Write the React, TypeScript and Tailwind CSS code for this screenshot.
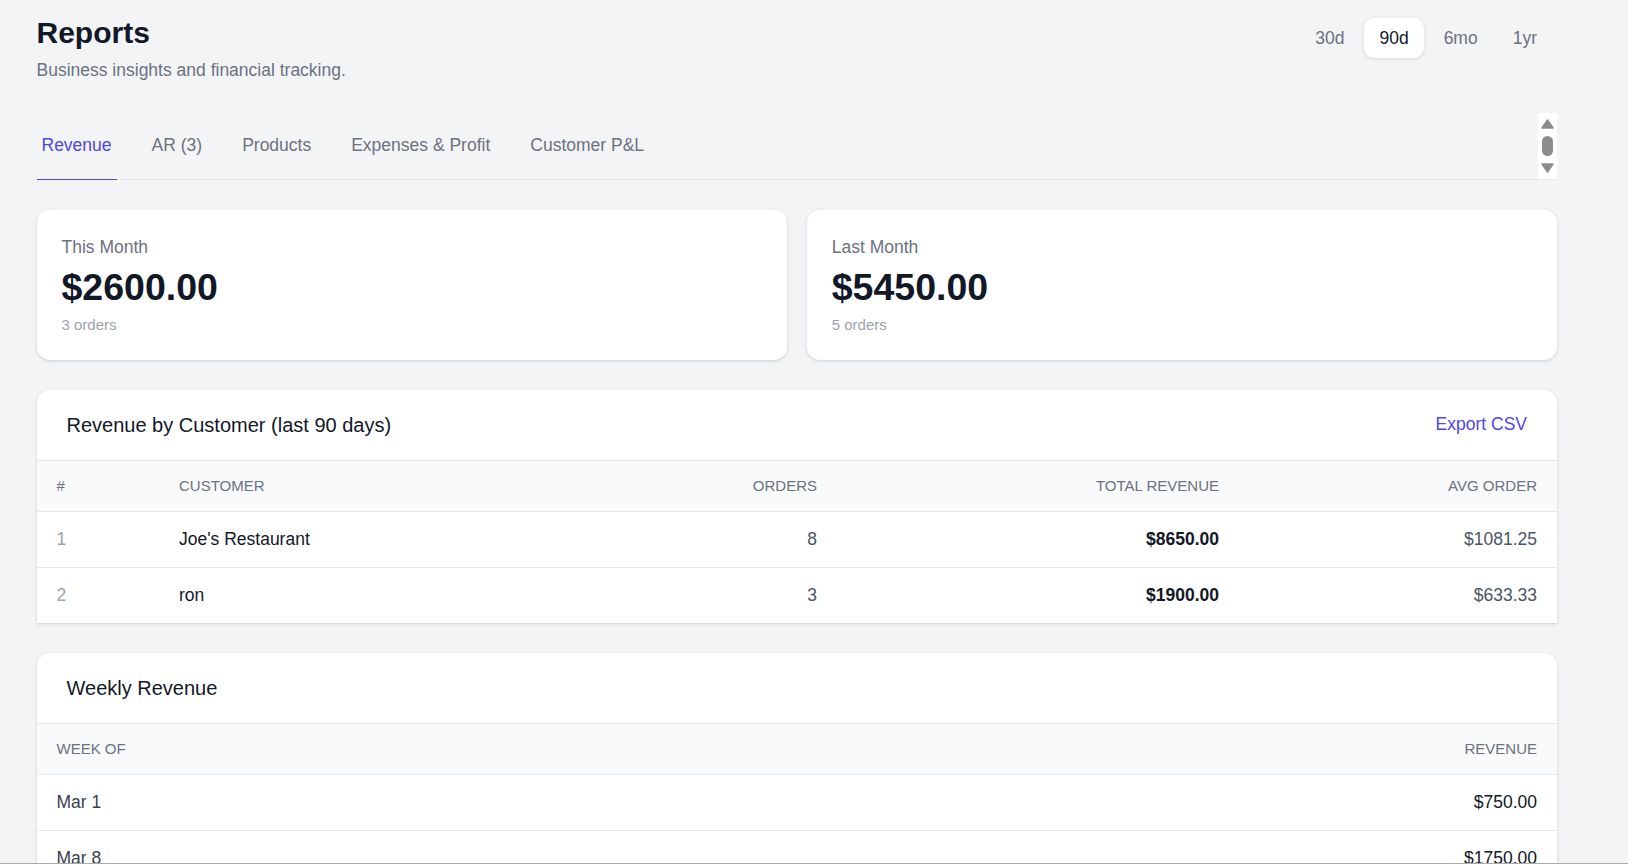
const sans = "font-['Liberation_Sans',Arial,sans-serif]";

const periods = ["30d", "90d", "6mo", "1yr"];
const tabs = ["Revenue", "AR (3)", "Products", "Expenses & Profit", "Customer P&L"];

function StatCard({ label, value, orders }: { label: string; value: string; orders: string }) {
  return (
    <div className="flex-1 h-[150px] bg-white rounded-[13px] shadow-[0_1px_4px_rgba(0,0,0,0.1),0_1px_2px_rgba(0,0,0,0.06)] pl-[25px] pt-[25px]">
      <p className="text-[17.5px] leading-[24px] text-[#6b7280]">{label}</p>
      <p className="text-[37.5px] leading-[44px] font-bold text-[#111827] mt-[6px]">{value}</p>
      <p className="text-[15px] leading-[20px] text-[#9ca3af] mt-[6px]">{orders}</p>
    </div>
  );
}

function CardHeader({ title, action }: { title: string; action?: string }) {
  return (
    <div className="h-[71px] flex items-center justify-between px-[30px] border-b border-[#e5e7eb]">
      <h2 className="text-[20px] text-[#111827]">{title}</h2>
      {action && <a className="text-[17.5px] text-[#4f46e5] mb-[2px]">{action}</a>}
    </div>
  );
}

const th = "h-[51px] px-[20px] text-[15px] font-normal text-[#6b7280] uppercase border-b border-[#e5e7eb] bg-[#f9fafb]";
const td = "h-[56px] px-[20px] text-[17.5px] border-b border-[#e5e7eb]";
const tdLast = "h-[55px] px-[20px] text-[17.5px]";

export default function App() {
  return (
    <div className={`${sans} h-[864px] overflow-hidden bg-[#f3f4f6] flex flex-col`}>
      <main className="flex-1 overflow-hidden pl-[36.5px] pr-[71px]">
        <div className="flex justify-between pt-[18px]">
          <div>
            <h1 className="text-[30px] leading-[30px] font-bold text-[#111827]">Reports</h1>
            <p className="text-[17.5px] leading-[24px] text-[#6b7280] mt-[10px]">Business insights and financial tracking.</p>
          </div>
          <div className="flex h-[40px] gap-[5px] pr-[5px]">
            {periods.map((p) => (
              <button
                key={p}
                className={
                  p === "90d"
                    ? "px-[15px] text-[17.5px] rounded-[10px] bg-white text-[#111827] shadow-[0_1px_4px_rgba(0,0,0,0.12)]"
                    : "px-[15px] text-[17.5px] rounded-[10px] text-[#6b7280]"
                }
              >
                {p}
              </button>
            ))}
          </div>
        </div>

        <div className="flex justify-between h-[67px] mt-[31px] border-b border-[#e5e7eb]">
          <div className="flex gap-[30px]">
            {tabs.map((t) => (
              <button
                key={t}
                className={
                  t === "Revenue"
                    ? "px-[5px] pb-[2px] h-[67px] text-[17.5px] text-[#4f46e5] border-b border-[#4f46e5]"
                    : "px-[5px] pb-[2px] h-[67px] text-[17.5px] text-[#6b7280]"
                }
              >
                {t}
              </button>
            ))}
          </div>
          <div className="w-[19px] h-[66px] bg-white flex flex-col items-center justify-between pt-[6px] pb-[6px]">
            <svg width="13" height="10" viewBox="0 0 13 10"><path d="M6.5 1 L12 9 H1 Z" fill="#8c8c8c" strokeLinejoin="round" strokeWidth="1.5" stroke="#8c8c8c" /></svg>
            <div className="w-[11px] h-[20px] rounded-full bg-[#8c8c8c]" />
            <svg width="13" height="10" viewBox="0 0 13 10"><path d="M1 1 H12 L6.5 9 Z" fill="#8c8c8c" strokeLinejoin="round" strokeWidth="1.5" stroke="#8c8c8c" /></svg>
          </div>
        </div>

        <div className="flex gap-[20px] mt-[30px]">
          <StatCard label="This Month" value="$2600.00" orders="3 orders" />
          <StatCard label="Last Month" value="$5450.00" orders="5 orders" />
        </div>

        <section className="mt-[30px] bg-white rounded-t-[13px] shadow-[0_1px_4px_rgba(0,0,0,0.1),0_1px_2px_rgba(0,0,0,0.06)]">
          <CardHeader title="Revenue by Customer (last 90 days)" action="Export CSV" />
          <table className="w-full border-separate border-spacing-0 table-fixed">
            <thead>
              <tr>
                <th className={`${th} w-[122.5px] text-left`}>#</th>
                <th className={`${th} w-[310px] text-left`}>Customer</th>
                <th className={`${th} w-[368px] text-right`}>Orders</th>
                <th className={`${th} w-[402px] text-right`}>Total Revenue</th>
                <th className={`${th} text-right`}>Avg Order</th>
              </tr>
            </thead>
            <tbody>
              <tr>
                <td className={`${td} text-[#9ca3af]`}>1</td>
                <td className={`${td} text-[#111827]`}>Joe's Restaurant</td>
                <td className={`${td} text-right text-[#4b5563]`}>8</td>
                <td className={`${td} text-right font-bold text-[#111827]`}>$8650.00</td>
                <td className={`${td} text-right text-[#4b5563]`}>$1081.25</td>
              </tr>
              <tr>
                <td className={`${tdLast} text-[#9ca3af]`}>2</td>
                <td className={`${tdLast} text-[#111827]`}>ron</td>
                <td className={`${tdLast} text-right text-[#4b5563]`}>3</td>
                <td className={`${tdLast} text-right font-bold text-[#111827]`}>$1900.00</td>
                <td className={`${tdLast} text-right text-[#4b5563]`}>$633.33</td>
              </tr>
            </tbody>
          </table>
        </section>

        <section className="mt-[30px] bg-white rounded-t-[13px] shadow-[0_1px_4px_rgba(0,0,0,0.1),0_1px_2px_rgba(0,0,0,0.06)]">
          <CardHeader title="Weekly Revenue" />
          <table className="w-full border-separate border-spacing-0">
            <thead>
              <tr>
                <th className={`${th} text-left`}>Week of</th>
                <th className={`${th} text-right`}>Revenue</th>
              </tr>
            </thead>
            <tbody>
              <tr>
                <td className={`${td} text-[#374151]`}>Mar 1</td>
                <td className={`${td} text-right text-[#111827]`}>$750.00</td>
              </tr>
              <tr>
                <td className={`${td} text-[#374151]`}>Mar 8</td>
                <td className={`${td} text-right text-[#111827]`}>$1750.00</td>
              </tr>
            </tbody>
          </table>
        </section>
      </main>
      <div className="h-[1px] shrink-0 bg-[#ababab]" />
    </div>
  );
}
